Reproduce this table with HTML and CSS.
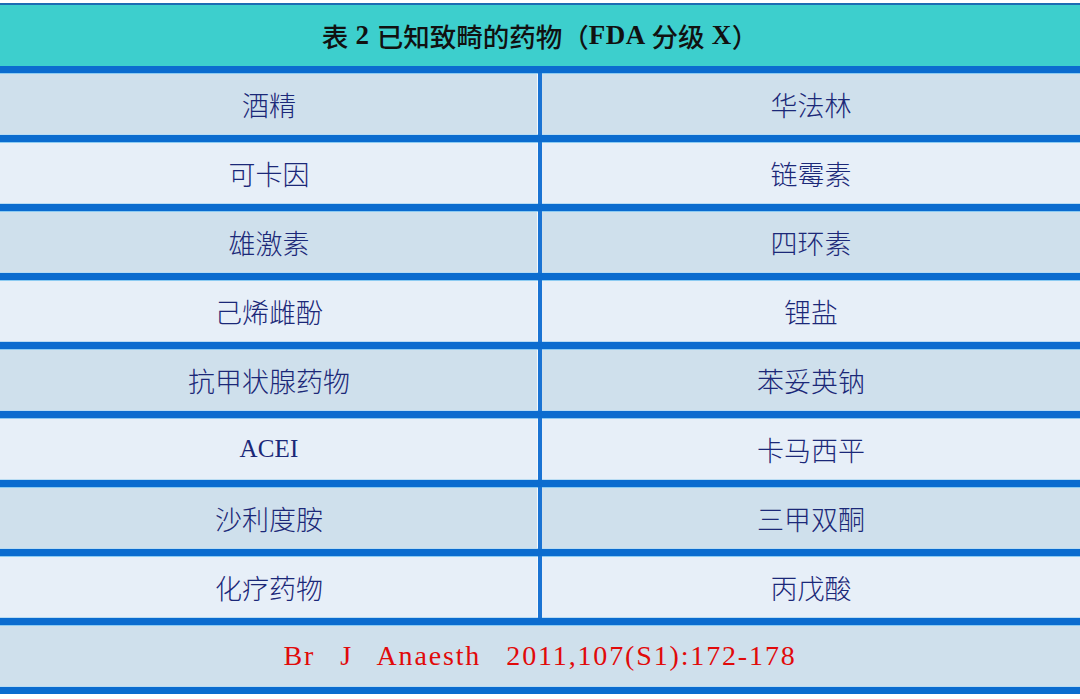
FILE: index.html
```html
<!DOCTYPE html>
<html lang="zh">
<head>
<meta charset="utf-8">
<title>表2 已知致畸的药物</title>
<link rel="stylesheet" href="styles.css">
</head>
<body>
<div class="table">
  <div class="title">表<span class="lat"> 2 </span>已知致畸的药物（<span class="lat">FDA </span>分级<span class="lat"> X</span>）</div>
  <div class="row dark"><div class="cell left">酒精</div><div class="cell">华法林</div></div>
  <div class="row light"><div class="cell left">可卡因</div><div class="cell">链霉素</div></div>
  <div class="row dark"><div class="cell left">雄激素</div><div class="cell">四环素</div></div>
  <div class="row light"><div class="cell left">己烯雌酚</div><div class="cell">锂盐</div></div>
  <div class="row dark"><div class="cell left">抗甲状腺药物</div><div class="cell">苯妥英钠</div></div>
  <div class="row light"><div class="cell left"><span class="latin">ACEI</span></div><div class="cell">卡马西平</div></div>
  <div class="row dark"><div class="cell left">沙利度胺</div><div class="cell">三甲双酮</div></div>
  <div class="row light"><div class="cell left">化疗药物</div><div class="cell">丙戊酸</div></div>
  <div class="row dark foot"><div class="cell ref"><span class="cite">Br  J  Anaesth  2011,107(S1):172-178</span></div></div>
</div>
</body>
</html>
```
FILE: styles.css
```css
html, body {
  margin: 0;
  padding: 0;
  background: #ffffff;
}
body {
  font-family: "Noto Sans CJK SC", "Liberation Sans", sans-serif;
}
.table {
  margin-top: 3px;
  width: 1080px;
  border-top: 2px solid #1c6db3;
  border-bottom: 7px solid #0b6ccf;
}
.title {
  height: 61px;
  background: #3dcfcd;
  display: flex;
  align-items: center;
  justify-content: center;
  font-size: 26.5px;
  font-weight: 500;
  color: #111111;
}
.lat {
  font-family: "Liberation Serif", serif;
  font-size: 27px;
  font-weight: 700;
  letter-spacing: 0.5px;
  white-space: pre;
}
.row {
  display: grid;
  grid-template-columns: 542px 538px;
  height: 62px;
  border-top: 7px solid #0b6ccf;
}
.row.dark { background: #cfe0ec; }
.row.light { background: #e7eff8; }
.row.foot { grid-template-columns: 1fr; }
.cell {
  display: flex;
  align-items: center;
  justify-content: center;
  font-size: 27px;
  font-weight: 300;
  color: #1b2878;
  box-shadow: inset 0 1px 0 #8ccbf2, inset 0 -1px 0 #b9dcf3;
}
.cell.left {
  border-right: 4px solid #1a73d3;
  box-shadow: inset 0 1px 0 #8ccbf2, inset 0 -1px 0 #b9dcf3, inset -1px 0 0 #f4f9fd;
}
.latin {
  font-family: "Liberation Serif", serif;
  font-size: 25px;
  letter-spacing: 0.2px;
}
.cite {
  font-family: "Liberation Serif", serif;
  font-size: 28px;
  letter-spacing: 1.85px;
  word-spacing: 3.7px;
  color: #e10a0a;
  white-space: pre;
}
```
